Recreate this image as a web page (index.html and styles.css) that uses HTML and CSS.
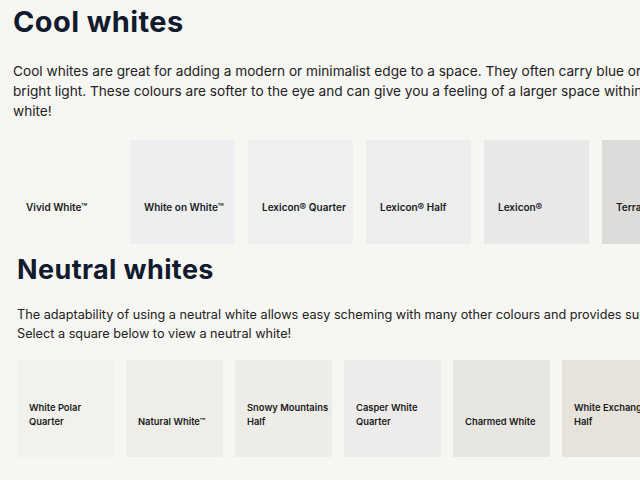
FILE: index.html
```html
<!DOCTYPE html>
<html lang="en">
<head>
<meta charset="utf-8">
<title>Whites</title>
<link rel="stylesheet" href="styles.css">
</head>
<body>
<main class="page">
  <section class="group group-cool">
    <h2 class="group-title">Cool whites</h2>
    <p class="group-intro"><span class="line">Cool whites are great for adding a modern or minimalist edge to a space. They often carry blue or grey undertones and suit rooms with</span><br><span class="line">bright light. These colours are softer to the eye and can give you a feeling of a larger space within a room. Select a square below to view a cool</span><br><span class="line">white!</span></p>
    <div class="swatches">
      <div class="swatch" style="background:#f6f6f3"><span class="swatch-name">Vivid White™</span></div>
      <div class="swatch" style="background:#eceef0"><span class="swatch-name">White on White™</span></div>
      <div class="swatch" style="background:#eeefef"><span class="swatch-name">Lexicon® Quarter</span></div>
      <div class="swatch" style="background:#eceeee"><span class="swatch-name">Lexicon® Half</span></div>
      <div class="swatch" style="background:#e7e8e7"><span class="swatch-name">Lexicon®</span></div>
      <div class="swatch" style="background:#dcdddb"><span class="swatch-name">Terrace White</span></div>
    </div>
  </section>
  <section class="group group-neutral">
    <h2 class="group-title">Neutral whites</h2>
    <p class="group-intro"><span class="line">The adaptability of using a neutral white allows easy scheming with many other colours and provides subtle warmth to any room.</span><br><span class="line">Select a square below to view a neutral white!</span></p>
    <div class="swatches">
      <div class="swatch" style="background:#f3f1ec"><span class="swatch-name">White Polar<br>Quarter</span></div>
      <div class="swatch" style="background:#efede8"><span class="swatch-name">Natural White™</span></div>
      <div class="swatch" style="background:#eeece7"><span class="swatch-name">Snowy Mountains<br>Half</span></div>
      <div class="swatch" style="background:#edecea"><span class="swatch-name">Casper White<br>Quarter</span></div>
      <div class="swatch" style="background:#e8e6e1"><span class="swatch-name">Charmed White</span></div>
      <div class="swatch" style="background:#e5e3dc"><span class="swatch-name">White Exchange<br>Half</span></div>
    </div>
  </section>
</main>
</body>
</html>
```
FILE: styles.css
```css
html, body {
  margin: 0;
  padding: 0;
}
body {
  background: #f6f6f3;
  font-family: Inter, "Noto Sans", "Liberation Sans", sans-serif;
  color: #222222;
  width: 640px;
  height: 480px;
  overflow: hidden;
}
.page {
  width: 1200px;
}
.group-title {
  margin: 0;
  font-family: Inter, "Liberation Sans", sans-serif;
  font-weight: 700;
  color: #121a2d;
  letter-spacing: 0.4px;
}
.group-intro {
  margin: 0;
}
.line {
  white-space: nowrap;
}
.swatches {
  display: flex;
}
.swatch {
  flex: none;
  display: flex;
  align-items: flex-end;
  box-sizing: border-box;
}
.swatch-name {
  font-weight: 600;
  color: #1a1a1a;
  white-space: nowrap;
}

/* Cool section */
.group-cool {
  padding: 4px 0 0 13px;
}
.group-cool .group-title {
  font-size: 29px;
  line-height: 36px;
}
.group-cool .group-intro {
  margin-top: 21px;
  font-size: 13.65px;
  line-height: 20px;
}
.group-cool .swatches {
  margin-top: 19px;
  margin-left: -1px;
  gap: 13px;
}
.group-cool .swatch {
  width: 105px;
  height: 104px;
  padding: 0 0 30px 14px;
}
.group-cool .swatch-name {
  font-size: 10px;
  line-height: 14px;
}

/* Neutral section */
.group-neutral {
  padding: 9px 0 0 17px;
}
.group-neutral .group-title {
  font-size: 27px;
  line-height: 34px;
}
.group-neutral .group-intro {
  margin-top: 18px;
  font-size: 12.7px;
  line-height: 19px;
}
.group-neutral .swatches {
  margin-top: 17px;
  gap: 12px;
}
.group-neutral .swatch {
  width: 97px;
  height: 97px;
  padding: 0 0 28px 12px;
}
.group-neutral .swatch-name {
  font-size: 9.4px;
  line-height: 14px;
}
```
